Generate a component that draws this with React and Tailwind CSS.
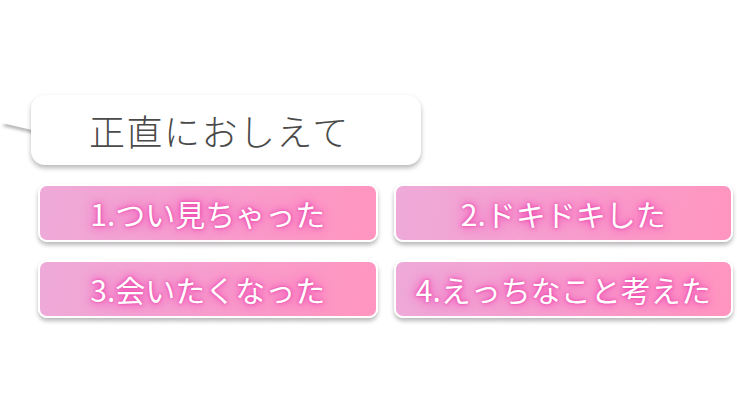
import React from "react";

const choices = [
  "1.つい見ちゃった",
  "2.ドキドキした",
  "3.会いたくなった",
  "4.えっちなこと考えた",
];

function Bubble() {
  return (
    <div className="relative ml-[31px] w-[390px]">
      {/* speech tail pointing left */}
      <svg
        className="absolute left-[-31px] top-[2px] overflow-visible"
        width="40"
        height="40"
        viewBox="0 0 40 40"
      >
        <defs>
          <filter id="tailShadow" x="-50%" y="-50%" width="200%" height="200%">
            <feGaussianBlur stdDeviation="1.6" />
          </filter>
        </defs>
        <polygon points="36,4 2,26 36,34" fill="rgba(0,0,0,0.28)" transform="translate(0,3)" filter="url(#tailShadow)" />
        <polygon points="36,4 2,26 36,34" fill="#ffffff" />
      </svg>
      <div className="relative flex h-[70px] items-center rounded-[14px] bg-white pl-[58px] shadow-[0_3px_5px_rgba(0,0,0,0.28)]">
        <span className="text-[36px] font-light leading-none tracking-[1.5px] text-[#4a4a4a] [font-family:'Noto_Sans_CJK_JP',sans-serif]">
          正直におしえて
        </span>
      </div>
    </div>
  );
}

function Choice({ label }) {
  return (
    <div className="flex h-[58px] items-center justify-center rounded-[9px] border-2 border-white bg-[linear-gradient(100deg,#eeaad9_0%,#f6a0cf_45%,#ff95bf_100%)] shadow-[0_3px_4px_rgba(0,0,0,0.28)]">
      <span className="text-[30px] font-normal leading-none text-white [font-family:'Noto_Sans_CJK_JP',sans-serif] [text-shadow:0_0_3px_#e83ea6,0_0_7px_#f050b4,0_0_12px_#f464c0,0_0_18px_#f878c8]">
        {label}
      </span>
    </div>
  );
}

export default function App() {
  return (
    <div className="h-[420px] w-[737px] bg-white pt-[95px]">
      <Bubble />
      <div className="ml-[38px] mt-[19px] grid w-[695px] grid-cols-2 gap-x-[16px] gap-y-[18px]">
        {choices.map((c) => (
          <Choice key={c} label={c} />
        ))}
      </div>
    </div>
  );
}
